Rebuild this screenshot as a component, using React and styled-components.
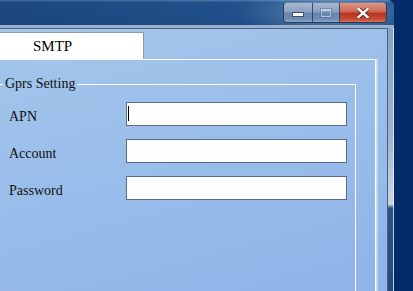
import React from "react";
import styled, { createGlobalStyle } from "styled-components";

const GlobalStyle = createGlobalStyle`
  html, body {
    margin: 0;
    padding: 0;
    overflow: hidden;
  }
  body {
    font-family: "Liberation Serif", "Times New Roman", serif;
  }
`;

const Desktop = styled.div`
  display: flex;
  width: 413px;
  height: 291px;
  overflow: hidden;
  background: linear-gradient(90deg, #1c519a 0%, #0d3f85 45%, #022a68 100%);
`;

const Window = styled.div`
  display: flex;
  flex-direction: column;
  flex-shrink: 0;
  width: 394px;
  height: 291px;
  border-top-right-radius: 7px;
  overflow: hidden;
  background: #8ea7c6;
`;

const TitleBar = styled.div`
  display: flex;
  justify-content: flex-end;
  align-items: flex-start;
  height: 28px;
  padding-right: 7px;
  box-sizing: border-box;
  background:
    radial-gradient(ellipse 90px 26px at 330px 12px, rgba(150, 178, 212, 0.55), rgba(150, 178, 212, 0) 100%),
    linear-gradient(90deg, rgba(0, 20, 60, 0.18), rgba(0, 0, 0, 0) 70%),
    linear-gradient(180deg, #5a82b4 0px, #22548f 2px, #1f5089 100%);
  border-bottom: 3px solid #9ab0cc;
`;

const Caption = styled.div`
  display: flex;
  margin-top: 2px;
  height: 19px;
  border: 1px solid #2a3d58;
  border-top-color: #6a84a8;
  border-radius: 4px;
  overflow: hidden;
`;

const CapButton = styled.div`
  display: flex;
  align-items: center;
  justify-content: center;
  width: ${(p) => p.$w}px;
  height: 100%;
  box-sizing: border-box;
  border-left: ${(p) => (p.$first ? "none" : "1px solid #34496a")};
  background: ${(p) =>
    p.$close
      ? "linear-gradient(180deg, #dc9787 0%, #cd6a55 45%, #b8351f 55%, #c44a33 85%, #d9705a 100%)"
      : "linear-gradient(180deg, #a7b9d2 0%, #8aa1c1 45%, #6985ad 55%, #6f8cb4 85%, #8aa4c6 100%)"};
`;

const MinGlyph = styled.div`
  width: 10px;
  height: 3px;
  margin-top: 4px;
  background: #fff;
  border: 1px solid #3a4f6e;
`;

const MaxGlyph = styled.div`
  width: 8px;
  height: 5px;
  border: 1px solid rgba(230, 236, 245, 0.55);
  border-top-width: 2px;
  box-shadow: 0 0 0 1px rgba(70, 90, 120, 0.35);
`;

const CloseGlyph = () => (
  <svg width="12" height="10" viewBox="0 0 12 10">
    <path
      d="M1.5 1 L10.5 9 M10.5 1 L1.5 9"
      stroke="#5a2016"
      strokeWidth="4"
      strokeLinecap="square"
    />
    <path
      d="M1.5 1 L10.5 9 M10.5 1 L1.5 9"
      stroke="#ffffff"
      strokeWidth="2.4"
      strokeLinecap="square"
    />
  </svg>
);

const Body = styled.div`
  display: flex;
  flex: 1;
`;

const Client = styled.div`
  display: flex;
  flex-direction: column;
  width: 388px;
  box-sizing: border-box;
  padding-top: 3px;
  border-top: 1px solid #4c627f;
  border-right: 1px solid #4a5f7c;
  background: linear-gradient(165deg, #a3c6ea 0%, #9bbfea 40%, #90b3e9 100%);
`;

const FrameEdge = styled.div`
  width: 6px;
  background:
    linear-gradient(90deg, rgba(255, 255, 255, 0) 0 5px, rgba(230, 238, 248, 0.8) 5px),
    linear-gradient(180deg, #8aa3c4 0%, #9fb3cd 40%, #cdd6e1 67%, #2d5185 68.5%, #254a7e 100%);
`;

const TabStrip = styled.div`
  display: flex;
  height: 27px;
`;

const Tab = styled.div`
  display: flex;
  align-items: center;
  width: 144px;
  box-sizing: border-box;
  padding-left: 33px;
  padding-top: 1px;
  background: #fff;
  border-top: 1px solid #8c99a8;
  border-right: 1px solid #8c99a8;
  font-size: 15px;
  color: #000;
`;

const TabPage = styled.div`
  display: flex;
  flex-direction: column;
  flex: 1;
  width: 376px;
  box-sizing: border-box;
  padding-top: 16px;
  border-top: 1px solid #fff;
  border-right: 1px solid #fff;
  box-shadow: 2px 0 0 rgba(255, 255, 255, 0.45);
`;

const Group = styled.fieldset`
  flex: 1;
  width: 356px;
  box-sizing: border-box;
  margin: 0;
  padding: 10px 0 0 0;
  border: none;
  border-top: 1px solid #fff;
  border-right: 1px solid #fff;
  min-width: 0;
`;

const Legend = styled.legend`
  margin-left: 3px;
  padding: 0 2px;
  font-size: 14px;
  line-height: 16px;
  color: #111;
`;

const Fields = styled.div`
  display: grid;
  grid-template-columns: 126px 221px;
  row-gap: 13px;
  align-items: center;
`;

const Label = styled.label`
  padding-left: 9px;
  padding-top: 6px;
  font-size: 14px;
  color: #111;
`;

const InputBox = styled.div`
  position: relative;
  height: 24px;
  box-sizing: border-box;
  border: 1px solid #5b6c84;
  background: #fefefe;

  &::after {
    content: "";
    display: ${(p) => (p.$focused ? "block" : "none")};
    position: absolute;
    left: 1px;
    top: 3px;
    width: 1px;
    height: 15px;
    background: #000;
  }
`;

const Input = styled.input`
  width: 100%;
  height: 100%;
  box-sizing: border-box;
  border: none;
  outline: none;
  padding: 0 3px;
  background: transparent;
  font-family: "Liberation Serif", serif;
  font-size: 14px;
`;

const fields = [
  { label: "APN", focused: true },
  { label: "Account" },
  { label: "Password", type: "password" },
];

export default function App() {
  return (
    <>
      <GlobalStyle />
      <Desktop>
        <Window>
          <TitleBar>
            <Caption>
              <CapButton $w={28} $first>
                <MinGlyph />
              </CapButton>
              <CapButton $w={27}>
                <MaxGlyph />
              </CapButton>
              <CapButton $w={47} $close>
                <CloseGlyph />
              </CapButton>
            </Caption>
          </TitleBar>
          <Body>
            <Client>
              <TabStrip>
                <Tab>SMTP</Tab>
              </TabStrip>
              <TabPage>
                <Group>
                  <Legend>Gprs Setting</Legend>
                  <Fields>
                    {fields.map((f) => (
                      <React.Fragment key={f.label}>
                        <Label>{f.label}</Label>
                        <InputBox $focused={f.focused}>
                          <Input type={f.type || "text"} />
                        </InputBox>
                      </React.Fragment>
                    ))}
                  </Fields>
                </Group>
              </TabPage>
            </Client>
            <FrameEdge />
          </Body>
        </Window>
      </Desktop>
    </>
  );
}
